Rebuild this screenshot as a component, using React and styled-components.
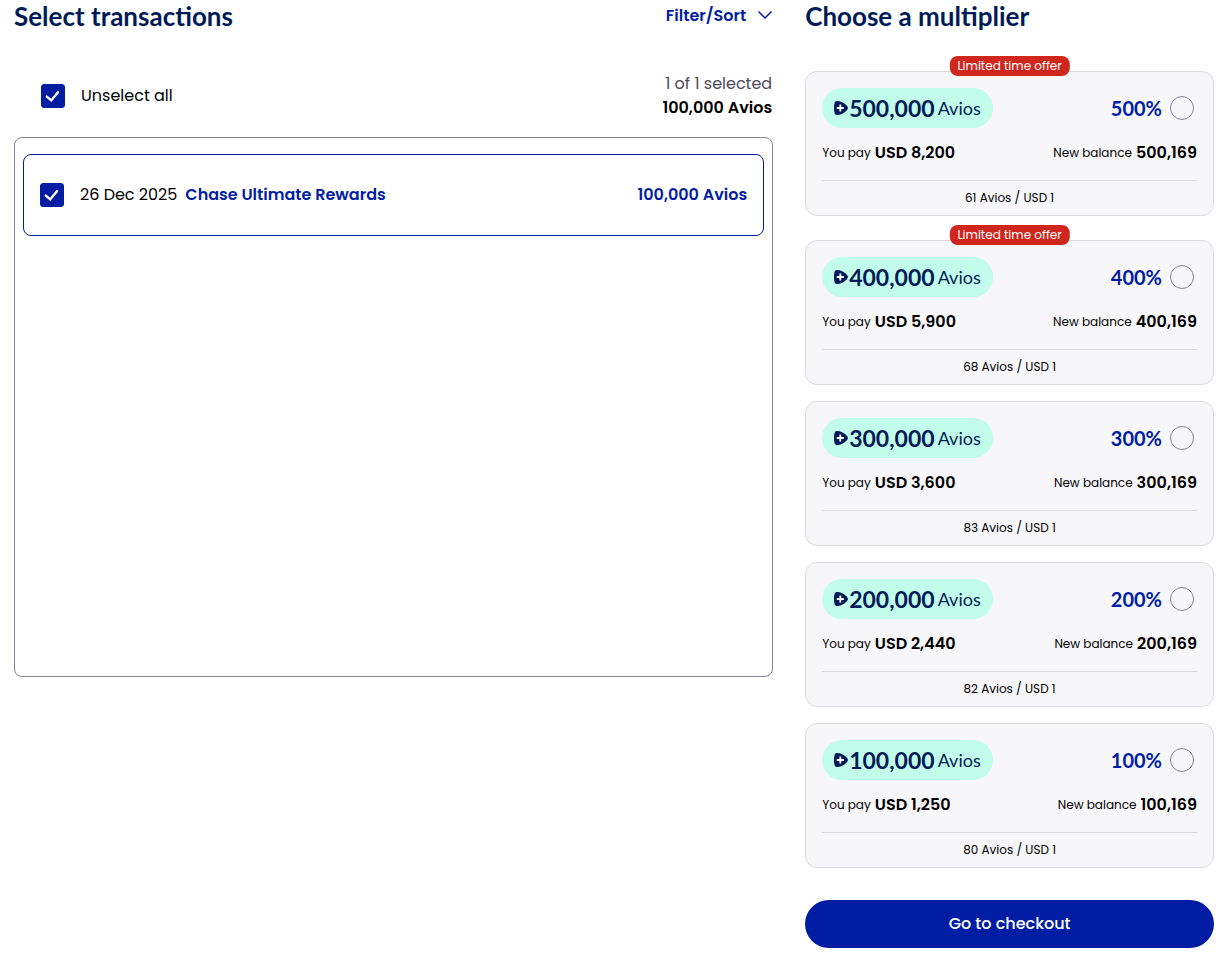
import React, { useState } from "react";
import styled, { createGlobalStyle } from "styled-components";

const blue = "#001da4";
const navy = "#001b58";
const bodyFont = 'Poppins, Inter, "Liberation Sans", sans-serif';
const displayFont = 'Lato, "Noto Sans", sans-serif';

const GlobalStyle = createGlobalStyle`
  *, *::before, *::after { box-sizing: border-box; }
  body {
    margin: 0;
    background: #fff;
    color: #000;
    font: 400 16px/24px ${bodyFont};
  }
`;

const Page = styled.main`
  display: grid;
  grid-template-columns: 13fr 7fr;
  gap: 32px;
  align-items: start;
  padding: 0 16px 8px 14px;
`;

const SectionHeader = styled.header`
  display: flex;
  justify-content: space-between;
  align-items: center;
  height: 32px;
  margin-bottom: ${(p) => p.$gap}px;
  padding-right: 1px;
`;

const Title = styled.h2`
  margin: 0;
  color: ${navy};
  font: 700 26px/32px ${displayFont};
  white-space: nowrap;
`;

const FilterButton = styled.button`
  display: flex;
  align-items: center;
  gap: 12px;
  padding: 0;
  border: 0;
  background: none;
  color: ${blue};
  font: 600 16px/26px ${bodyFont};
  cursor: pointer;
`;

const SelectionBar = styled.div`
  display: flex;
  justify-content: space-between;
  align-items: center;
  margin-bottom: 17px;
  padding: 0 1px 0 27px;
`;

const CheckLabel = styled.label`
  display: flex;
  align-items: center;
  gap: 16px;
  cursor: pointer;
`;

const CheckWrap = styled.span`
  display: grid;
  width: 24px;
  height: 24px;
  > * { grid-area: 1 / 1; }
  > svg { pointer-events: none; }
`;

const CheckInput = styled.input`
  appearance: none;
  width: 24px;
  height: 24px;
  margin: 0;
  border: 1px solid ${blue};
  border-radius: 3px;
  background: #fff;
  &:checked { background: ${blue}; }
`;

const Summary = styled.div`
  text-align: right;
`;

const Muted = styled.div`
  color: #4c4b57;
`;

const Strong = styled.div`
  font-weight: 600;
`;

const TransactionList = styled.div`
  min-height: 540px;
  padding: 16px 8px;
  border: 1px solid #868593;
  border-radius: 8px;
`;

const Transaction = styled.div`
  display: flex;
  justify-content: space-between;
  align-items: center;
  padding: 28px 16px;
  border: 1px solid ${blue};
  border-radius: 8px;
`;

const TransactionText = styled.span`
  display: flex;
  gap: 8px;
`;

const Accent = styled.span`
  color: ${blue};
  font-weight: 600;
`;

const Cards = styled.div`
  display: flex;
  flex-direction: column;
  gap: 16px;
`;

const Card = styled.label`
  position: relative;
  display: block;
  padding: 16px 16px 0;
  border: 1px solid #dadbde;
  border-radius: 12px;
  background: #f7f7fa;
  cursor: pointer;
  & + &[data-offer="true"] { margin-top: 8px; }
`;

const OfferBadge = styled.span`
  position: absolute;
  top: -16px;
  left: 50%;
  transform: translateX(-50%);
  padding: 0 8px;
  border-radius: 8px;
  background: #cf261d;
  color: #fff;
  font-size: 12px;
  line-height: 20px;
  white-space: nowrap;
`;

const CardRow = styled.span`
  display: flex;
  justify-content: space-between;
  align-items: center;
`;

const Pill = styled.span`
  display: flex;
  align-items: center;
  height: 40px;
  padding: 0 12px;
  border-radius: 20px;
  background: #c1fdea;
  color: ${navy};
  font: 400 18px/24px ${displayFont};
  white-space: nowrap;
`;

const PillAmount = styled.span`
  margin: 0 3px 0 1px;
  font-size: 23px;
  font-weight: 700;
`;

const Choice = styled.span`
  display: flex;
  align-items: center;
  gap: 8px;
  padding-right: 3px;
  color: ${blue};
  font: 700 20px/24px ${displayFont};
`;

const Radio = styled.input`
  appearance: none;
  width: 24px;
  height: 24px;
  margin: 0;
  border: 1px solid #868593;
  border-radius: 50%;
  &:checked { border: 7px solid ${blue}; }
`;

const Costs = styled(CardRow)`
  padding: 13px 0 15px;
  border-bottom: 1px solid #dadbde;
`;

const Cost = styled.span`
  display: flex;
  align-items: center;
  gap: 4px;
  font-size: 12px;
  white-space: nowrap;
`;

const CostValue = styled.span`
  font-size: 16px;
  font-weight: 600;
`;

const Rate = styled.span`
  display: block;
  font-size: 12px;
  line-height: 34px;
  text-align: center;
`;

const Checkout = styled.button`
  width: 100%;
  height: 48px;
  margin-top: 32px;
  border: 0;
  border-radius: 24px;
  background: ${blue};
  color: #fff;
  font: 500 16px/24px ${bodyFont};
  cursor: pointer;
`;

function Checkbox({ checked, onChange, label }) {
  return (
    <CheckWrap>
      <CheckInput type="checkbox" checked={checked} onChange={onChange} />
      {checked && (
        <svg width="24" height="24" viewBox="0 0 24 24" fill="none" stroke="#fff" strokeWidth="2.4" strokeLinecap="round" aria-hidden="true">
          <path d="M5.8 12.6 10.2 16.4 17 8.2" />
        </svg>
      )}
    </CheckWrap>
  );
}

function AviosMark() {
  return (
    <svg width="14" height="14" viewBox="0 0 14 14" aria-hidden="true">
      <path fill={navy} d="M1.8.3C4.3-.5 9.8 1 12.9 4.8c1.4 1.7 1.4 2.7 0 4.4C9.8 13 4.3 14.5 1.8 13.7.5 13.2 0 10.5 0 7S.5.8 1.8.3Z" />
      <path fill="none" stroke="#fff" strokeWidth="1.8" d="M6.3 3.5v7M2.8 7h7" />
    </svg>
  );
}

const options = [
  { percent: 500, pay: "8,200", rate: 61, offer: true },
  { percent: 400, pay: "5,900", rate: 68, offer: true },
  { percent: 300, pay: "3,600", rate: 83 },
  { percent: 200, pay: "2,440", rate: 82 },
  { percent: 100, pay: "1,250", rate: 80 },
];

export default function App() {
  const [selected, setSelected] = useState(true);
  const [multiplier, setMultiplier] = useState(null);
  const toggle = () => setSelected((value) => !value);

  return (
    <>
      <GlobalStyle />
      <Page>
        <section>
          <SectionHeader $gap={40}>
            <Title>Select transactions</Title>
            <FilterButton type="button">
              Filter/Sort
              <svg width="14" height="12" viewBox="0 0 14 12" fill="none" stroke={blue} strokeWidth="1.5" strokeLinejoin="round" aria-hidden="true">
                <path d="M.5 1.5 7 8l6.5-6.5" />
              </svg>
            </FilterButton>
          </SectionHeader>
          <SelectionBar>
            <CheckLabel>
              <Checkbox checked={selected} onChange={toggle} />
              {selected ? "Unselect all" : "Select all"}
            </CheckLabel>
            <Summary>
              <Muted>{selected ? 1 : 0} of 1 selected</Muted>
              <Strong>{selected ? "100,000" : "0"} Avios</Strong>
            </Summary>
          </SelectionBar>
          <TransactionList>
            <Transaction>
              <CheckLabel>
                <Checkbox checked={selected} onChange={toggle} />
                <TransactionText>
                  <span>26 Dec 2025</span>
                  <Accent>Chase Ultimate Rewards</Accent>
                </TransactionText>
              </CheckLabel>
              <Accent>100,000 Avios</Accent>
            </Transaction>
          </TransactionList>
        </section>
        <section>
          <SectionHeader $gap={39}>
            <Title>Choose a multiplier</Title>
          </SectionHeader>
          <Cards>
            {options.map(({ percent, pay, rate, offer }) => (
              <Card key={percent} data-offer={Boolean(offer)}>
                {offer && <OfferBadge>Limited time offer</OfferBadge>}
                <CardRow>
                  <Pill>
                    <AviosMark />
                    <PillAmount>{percent},000</PillAmount>
                    Avios
                  </Pill>
                  <Choice>
                    {percent}%
                    <Radio
                      type="radio"
                      name="multiplier"
                      value={percent}
                      checked={multiplier === percent}
                      onChange={() => setMultiplier(percent)}
                    />
                  </Choice>
                </CardRow>
                <Costs>
                  <Cost>You pay <CostValue>USD {pay}</CostValue></Cost>
                  <Cost>New balance <CostValue>{percent},169</CostValue></Cost>
                </Costs>
                <Rate>{rate} Avios / USD 1</Rate>
              </Card>
            ))}
          </Cards>
          <Checkout type="button">Go to checkout</Checkout>
        </section>
      </Page>
    </>
  );
}
